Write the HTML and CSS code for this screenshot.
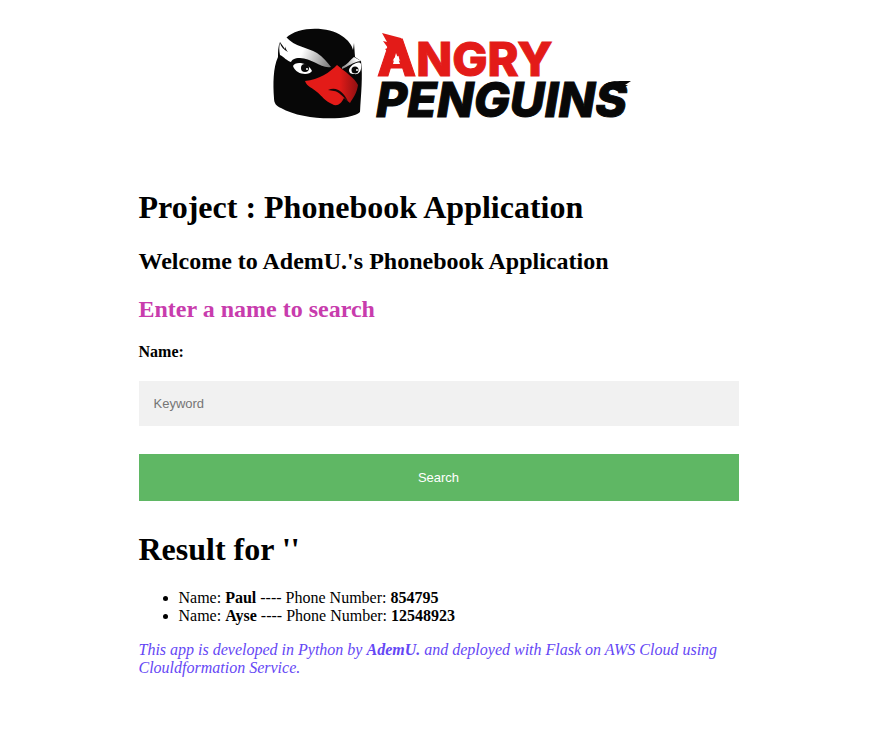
FILE: index.html
```html
<!DOCTYPE html>
<html lang="en">
<head>
<meta charset="utf-8">
<meta name="viewport" content="width=device-width, initial-scale=1">
<title>Phonebook Application</title>
<link rel="stylesheet" href="styles.css">
</head>
<body>
<main class="container">
  <svg class="logo" viewBox="260 20 380 110" role="img" aria-label="Angry Penguins">
    <defs>
      <linearGradient id="brow" gradientUnits="userSpaceOnUse" x1="288" x2="330" y1="50" y2="68">
        <stop offset=".3" stop-color="#fff"/><stop offset="1" stop-color="#777"/>
      </linearGradient>
      <linearGradient id="brow-right" gradientUnits="userSpaceOnUse" x1="342" x2="357" y1="67" y2="60">
        <stop offset="0" stop-color="#888"/><stop offset="1" stop-color="#fff"/>
      </linearGradient>
      <linearGradient id="beak" x1="0" x2="1">
        <stop offset=".65" stop-color="#e31b18"/><stop offset="1" stop-color="#8f1012"/>
      </linearGradient>
    </defs>
    <path fill="#070707" d="M286 38C298 26 328 26 342 36C348 40 352 45 353 50L354 43L355 57L361 61C363 76 361 94 360 112C351 121 303 121 281 108C276 106 274 103 274 98C273 84 273 68 278 57C278 51 278 47 280 42L285 49Z"/>
    <path fill="url(#brow)" d="M286 37C295 47 307 47 317 53C323 57 328 63 331 67C321 69 312 58 300 58C294 58 292 60 291 62C287 61 284 57 280 55C279 51 279 46 280 43C281 47 284 50 288 52C284 47 284 42 286 37Z"/>
    <path fill="url(#brow-right)" d="M342 67C347 65 350 60 354 57L361 61C352 62 348 67 342 69Z"/>
    <path fill="#fff" d="M293 66C295 61 308 62 312 71C309 76 296 75 293 66ZM349 70C350 65 359 60 361 64C362 71 359 75 354 74C351 74 349 73 349 70Z"/>
    <circle cx="305" cy="68" r="4" fill="#090909"/><circle cx="355" cy="70" r="3.500" fill="#090909"/>
    <circle cx="307" cy="69" r="1" fill="#fff"/><circle cx="357" cy="70" r="1" fill="#fff"/>
    <path fill="url(#beak)" d="M305 81C319 80 330 72 337 65C344 71 355 78 358 85C357 93 353 98 350 103L344 98C341 104 337 107 332 104C325 101 322 96 317 92C313 88 307 87 305 81Z"/>
    <path fill="#17090a" d="M328 90C337 86 343 92 348 101C343 97 338 91 334 91Z"/>
    <text class="word-angry" x="377" y="76"><tspan class="initial">A</tspan>NGRY</text>
    <path fill="#e31b18" d="M382 33L401 38L405 52L391 60L390 54L385 49L388 48L383 41L387 42Z"/>
    <path fill="#fff" d="M396 53L393 64H400Z"/>
    <text class="word-penguins" x="376" y="117">PENGUINS</text>
    <path fill="#080808" d="M604 85C609 80 622 81 631 81L625 85L628 85L623 88L624 89L619 92Z"/>
  </svg>
  <h1 class="title">Project : Phonebook Application</h1>
  <h2>Welcome to AdemU.'s Phonebook Application</h2>
  <h2 class="prompt">Enter a name to search</h2>
  <form>
    <label for="keyword">Name:</label>
    <input id="keyword" type="text" name="username" placeholder="Keyword">
    <button type="submit">Search</button>
  </form>
  <h1>Result for ''</h1>
  <ul>
    <li>Name: <b>Paul</b> ---- Phone Number: <b>854795</b></li>
    <li>Name: <b>Ayse</b> ---- Phone Number: <b>12548923</b></li>
  </ul>
  <p class="credit">This app is developed in Python by <b>AdemU.</b> and deployed with Flask on AWS Cloud using Clouldformation Service.</p>
</main>
</body>
</html>
```
FILE: styles.css
```css
* { box-sizing: border-box; }
body {
  margin: 0;
  padding: 20px 14px 20px 0;
  background: #fff;
  color: #000;
  font: 16px/18px "Liberation Serif", "Times New Roman", serif;
}
.container { max-width: 600px; margin: 0 auto; }
.logo { display: block; width: 380px; max-width: 100%; margin: 0 auto 59px 121px; }
.word-angry, .word-penguins { font-family: Inter, sans-serif; font-weight: 800; stroke-width: 1px; }
.word-angry { font-size: 47px; fill: #e31b18; stroke: #e31b18; }
.initial { font-size: 51px; }
.word-penguins { font-size: 48px; font-style: italic; fill: #080808; stroke: #080808; }
h1, h2 { font-weight: bold; }
h1 { margin: 30px 0 21px; font-size: 32px; line-height: 37px; }
h2 { margin: 0 0 20px; font-size: 24px; line-height: 28px; }
.prompt { color: #c83cad; }
label { display: block; font-weight: bold; }
input, button {
  display: block;
  width: 100%;
  border: 0;
  border-radius: 0;
  font: 13px/15px "Liberation Sans", Arial, sans-serif;
}
input { margin: 20px 0 28px; padding: 15px; background: #f1f1f1; color: #000; }
input::placeholder { color: #757575; opacity: 1; }
button { padding: 16px 20px; background: #5fb764; color: #fff; cursor: pointer; }
ul { margin: 0 0 16px; padding-left: 40px; }
.credit { margin: 0; color: #6547f5; font-style: italic; }
```
